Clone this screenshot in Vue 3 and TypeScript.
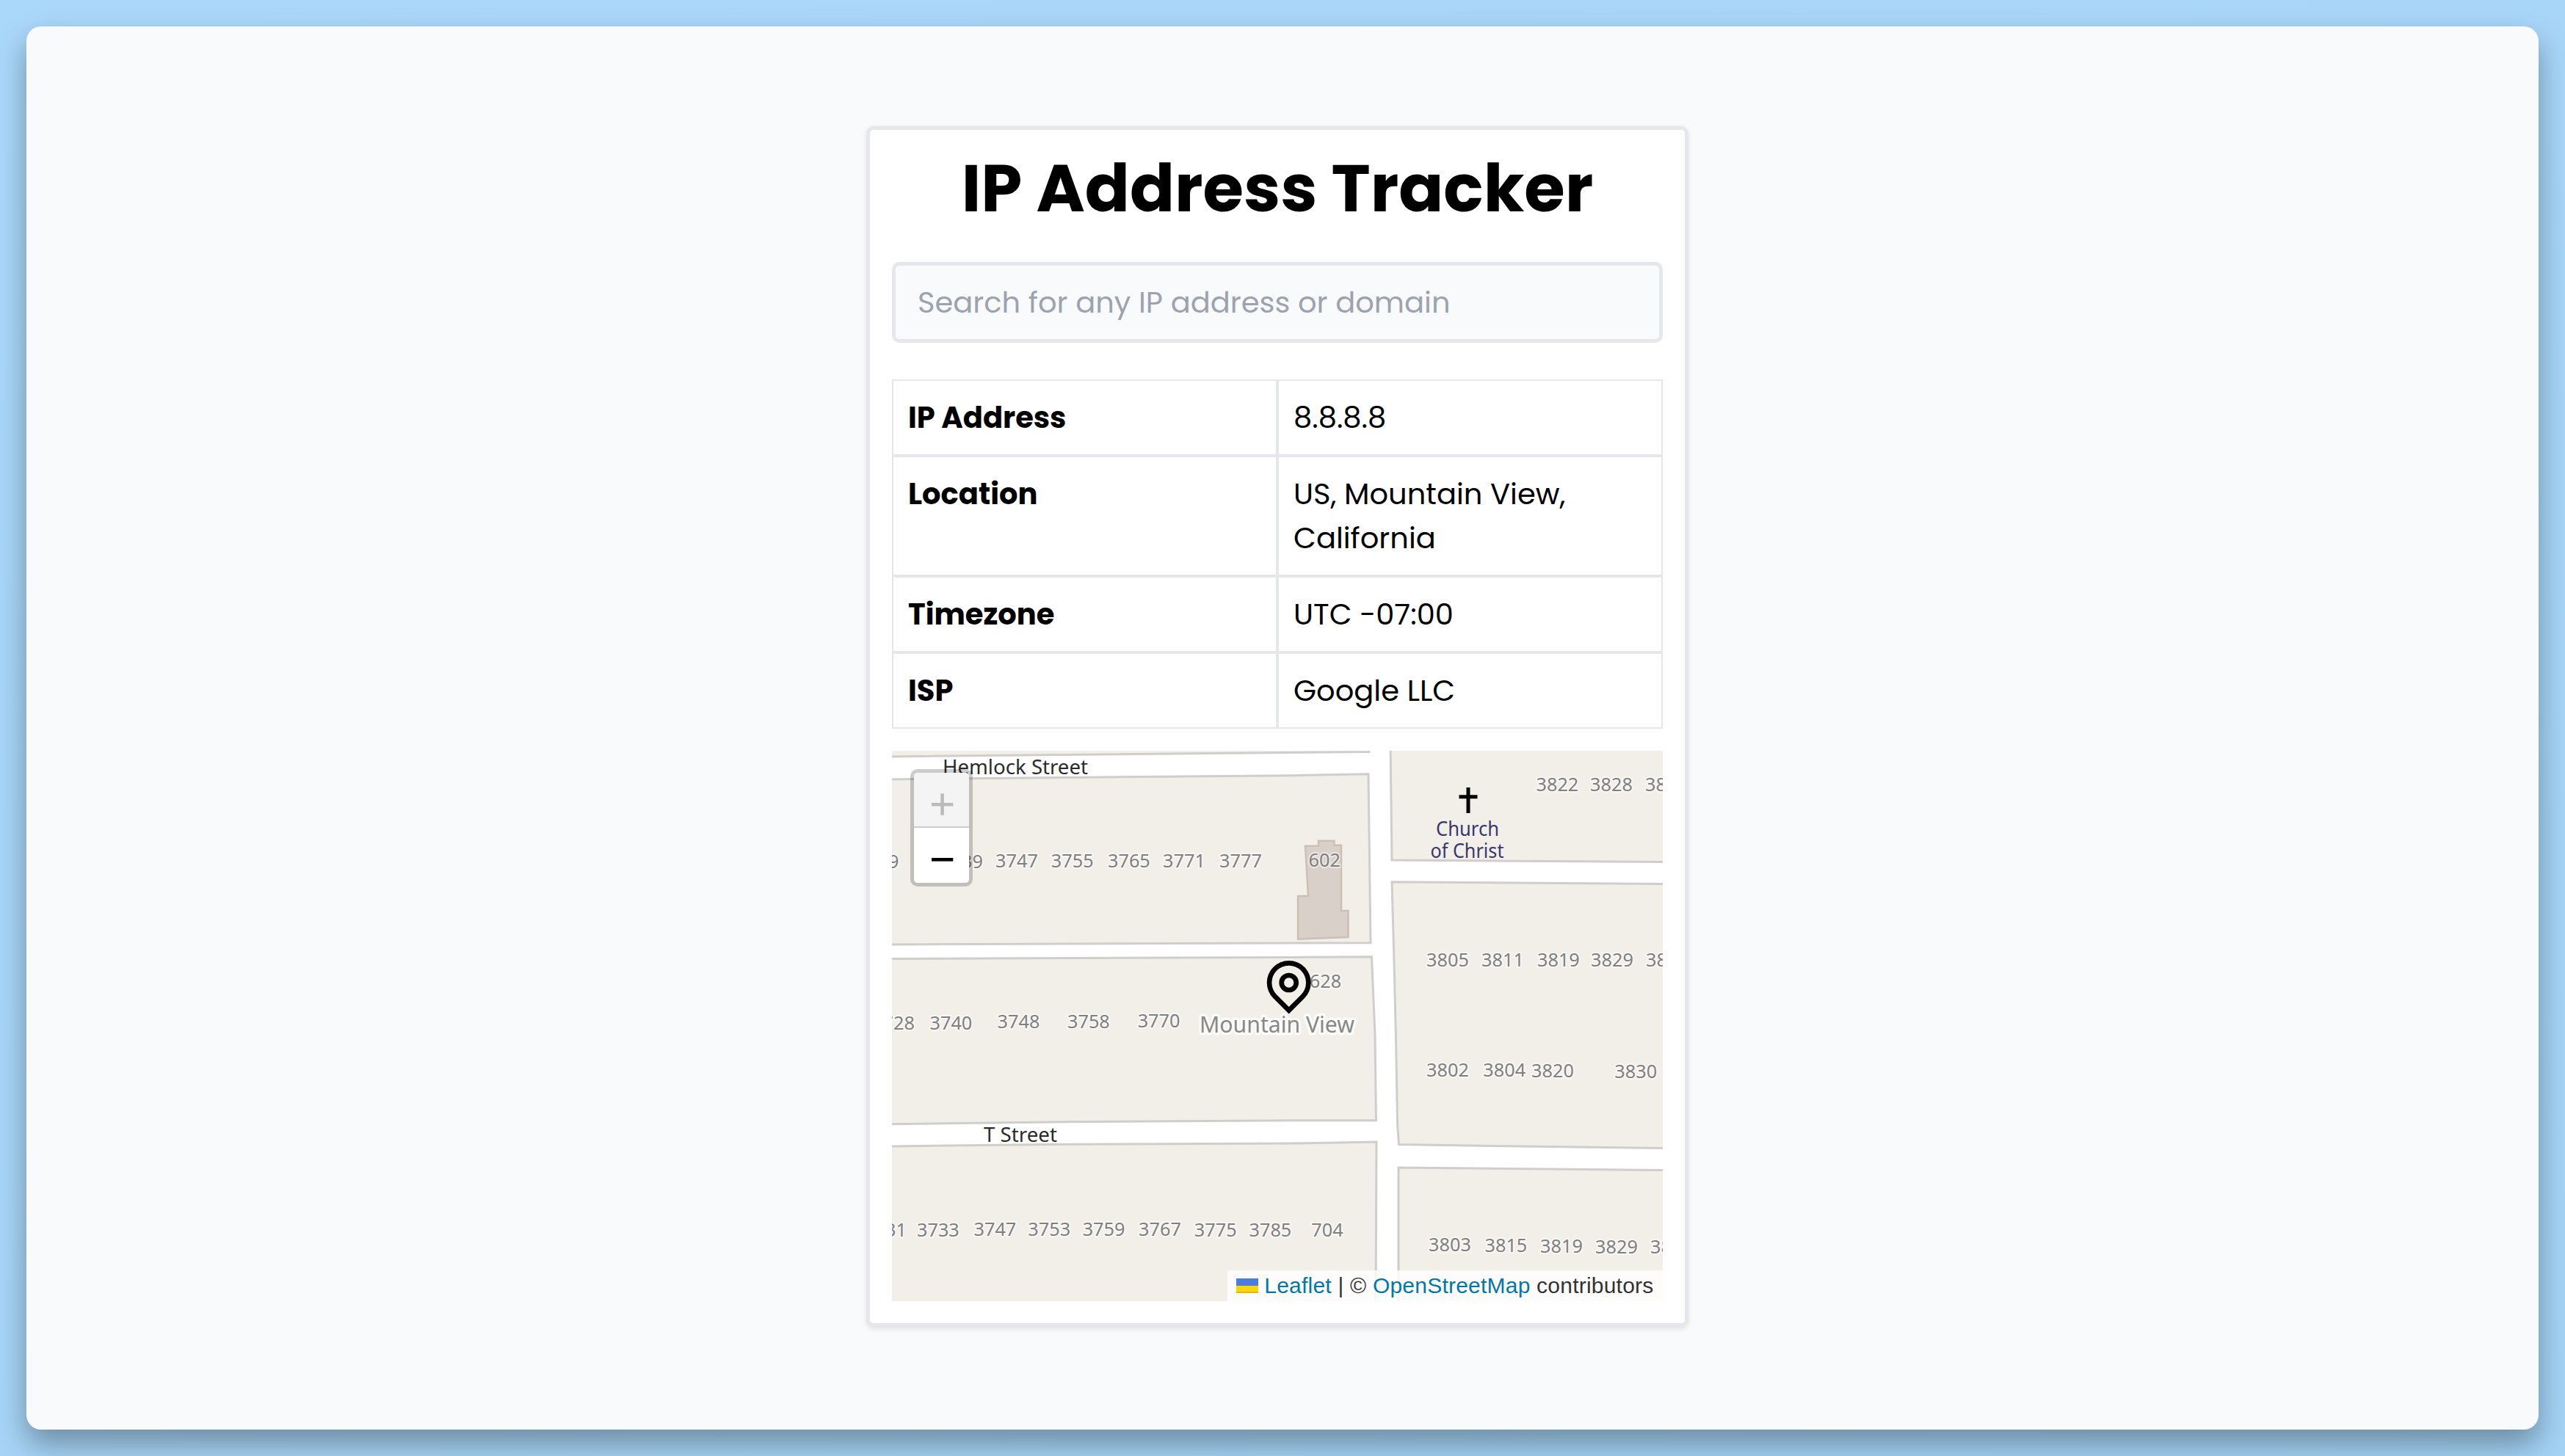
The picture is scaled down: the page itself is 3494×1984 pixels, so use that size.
<script setup lang="ts">
import { ref } from 'vue'

interface Row { label: string; lines: string[] }
interface House { t: string; x: number; y: number; a?: 'start' | 'end' }

const query = ref('')

const rows: Row[] = [
  { label: 'IP Address', lines: ['8.8.8.8'] },
  { label: 'Location', lines: ['US, Mountain View,', 'California'] },
  { label: 'Timezone', lines: ['UTC -07:00'] },
  { label: 'ISP', lines: ['Google LLC'] },
]

const blocks = [
  'M-10 -10V8L650 1.5V-10Z',
  'M-10 39L235 36.5L545 33.7L649 31.7L652 261.7L545 262L-10 264Z',
  'M-10 283.5L545 281.5L653.5 280.7L658 387L659.5 503.7L545 503.7L235 505.7L-10 509Z',
  'M-10 539L235 536.3L545 535L660 533L659 760H-10Z',
  'M679 -10L681 149L1060 151.5V-10Z',
  'M681 178.7L1060 181.5V541.5L857 539L690.5 536.5L688.6 510L686.4 387L684 287Z',
  'M690 568L1060 571.5V760H690Z',
]

const houses: House[] = [
  { t: '3729', x: 9.5, y: 160, a: 'end' }, { t: '3739', x: 124, y: 160, a: 'end' },
  { t: '3747', x: 170, y: 159 }, { t: '3755', x: 245.7, y: 159 }, { t: '3765', x: 322.9, y: 159 },
  { t: '3771', x: 398, y: 159 }, { t: '3777', x: 475, y: 158.5 }, { t: '602', x: 589.3, y: 158 },
  { t: '3728', x: 31, y: 379.5, a: 'end' }, { t: '3740', x: 80.4, y: 379.5 }, { t: '3748', x: 172.5, y: 378 },
  { t: '3758', x: 267.9, y: 377.7 }, { t: '3770', x: 363.6, y: 377.2 }, { t: '628', x: 590.4, y: 322.5 },
  { t: '3822', x: 906.4, y: 55 }, { t: '3828', x: 980, y: 54.7 }, { t: '3836', x: 1026, y: 54.7, a: 'start' },
  { t: '3805', x: 757, y: 293.5 }, { t: '3811', x: 832, y: 294 }, { t: '3819', x: 907.9, y: 294 },
  { t: '3829', x: 981, y: 294 }, { t: '3835', x: 1027, y: 294, a: 'start' },
  { t: '3802', x: 757, y: 443.5 }, { t: '3804', x: 834.3, y: 443.5 }, { t: '3820', x: 900, y: 445 }, { t: '3830', x: 1013.2, y: 445.5 },
  { t: '3803', x: 760, y: 682 }, { t: '3815', x: 836.4, y: 682.5 }, { t: '3819', x: 912, y: 683.5 },
  { t: '3829', x: 987, y: 684.5 }, { t: '3835', x: 1033, y: 684.7, a: 'start' },
  { t: '3731', x: 20, y: 662, a: 'end' }, { t: '3733', x: 62.9, y: 662 }, { t: '3747', x: 140.4, y: 661 },
  { t: '3753', x: 214.3, y: 661 }, { t: '3759', x: 288.6, y: 660.5 }, { t: '3767', x: 365, y: 660.5 },
  { t: '3775', x: 440.7, y: 661.5 }, { t: '3785', x: 515.4, y: 662 }, { t: '704', x: 592.9, y: 662 },
]
</script>

<template>
  <div class="page">
    <main class="panel">
      <section class="card">
        <h1 class="title">IP Address Tracker</h1>
        <input v-model="query" class="search" type="text" placeholder="Search for any IP address or domain" />
        <div class="table">
          <div v-for="row in rows" :key="row.label" class="row">
            <div class="cell head">{{ row.label }}</div>
            <div class="cell">
              <div v-for="line in row.lines" :key="line">{{ line }}</div>
            </div>
          </div>
        </div>
        <div class="map">
          <svg class="tiles" viewBox="0 0 1050 750" width="1050" height="750">
            <path v-for="d in blocks" :key="d" :d="d" class="block" />
            <path class="building" d="M563 129.7H581V122.7H602.5V128.7H612V218H621.5V254L553 256.7V198H567Z" />
            <g class="house">
              <text v-for="(h, i) in houses" :key="i" :x="h.x" :y="h.y" :text-anchor="h.a || 'middle'">{{ h.t }}</text>
            </g>
            <text class="street" x="69" y="32" textLength="198" lengthAdjust="spacingAndGlyphs">Hemlock Street</text>
            <text class="street" x="125" y="532.5" textLength="100" lengthAdjust="spacingAndGlyphs">T Street</text>
            <path class="cross" d="M785 50V85M772.5 62.7H797.5" />
            <text class="church" x="741" y="116.3" textLength="86" lengthAdjust="spacingAndGlyphs">Church</text>
            <text class="church" x="733.5" y="146.3" textLength="100" lengthAdjust="spacingAndGlyphs">of Christ</text>
            <text class="place" x="419" y="384.3" textLength="211" lengthAdjust="spacingAndGlyphs">Mountain View</text>
            <path
              transform="translate(500.7 279.3) scale(3.3333)"
              d="M12 20.9l4.95-4.95a7 7 0 1 0-9.9 0L12 20.9zm0 2.828l-6.364-6.364a9 9 0 1 1 12.728 0L12 23.728zM12 13a2 2 0 1 0 0-4 2 2 0 0 0 0 4zm0 2a4 4 0 1 1 0-8 4 4 0 0 1 0 8z"
            />
          </svg>
          <div class="zoom">
            <button class="zbtn off" aria-label="Zoom in">
              <svg width="75" height="75" viewBox="0 0 75 75"><path d="M24 43.3H53.3M38.6 28.3V57.7" /></svg>
            </button>
            <button class="zbtn" aria-label="Zoom out">
              <svg width="75" height="75" viewBox="0 0 75 75"><path d="M24 43.3H53.3" /></svg>
            </button>
          </div>
          <div class="credit">
            <svg class="flag" width="30" height="20" viewBox="0 0 12 8"><path fill="#4C7BE1" d="M0 0h12v4H0z" /><path fill="#FFD500" d="M0 4h12v3H0z" /><path fill="#E0BC00" d="M0 7h12v1H0z" /></svg>
            <a>Leaflet</a> <span>|</span> © <a>OpenStreetMap</a> contributors
          </div>
        </div>
      </section>
    </main>
  </div>
</template>

<style>
body {
  margin: 0;
}
</style>

<style scoped>
.page {
  box-sizing: border-box;
  width: 3494px;
  height: 1984px;
  padding: 36px;
  background: linear-gradient(160deg, #aad8fb, #a4d3f5);
  overflow: hidden;
  font-family: Poppins, Inter, sans-serif;
  color: #000;
}
.panel {
  box-sizing: border-box;
  height: 1912px;
  padding: 136px 14px 0 0;
  border-radius: 20px;
  background: #f9fafc;
  box-shadow: 0 20px 40px rgba(0, 0, 0, 0.34);
  display: flex;
  justify-content: center;
  align-items: flex-start;
}
.card {
  box-sizing: border-box;
  width: 1120px;
  height: 1636px;
  padding: 30px;
  border: 5px solid #e5e7eb;
  border-radius: 10px;
  background: #fff;
  box-shadow: 0 2.5px 7.5px rgba(0, 0, 0, 0.1);
}
.title {
  margin: 0;
  height: 150px;
  font-size: 90px;
  line-height: 100px;
  font-weight: 700;
  text-align: center;
  white-space: nowrap;
}
.search {
  display: block;
  box-sizing: border-box;
  width: 100%;
  height: 110px;
  margin: 0 0 50px;
  padding: 0 30px;
  border: 5px solid #e5e7eb;
  border-radius: 10px;
  background: #f9fafb;
  font: 40px Poppins, Inter, sans-serif;
  outline: none;
}
.search::placeholder {
  color: #9ca3af;
  opacity: 1;
}
.table {
  margin-bottom: 30px;
  font-size: 40px;
  line-height: 60px;
}
.row {
  display: flex;
}
.cell {
  box-sizing: border-box;
  width: 50%;
  padding: 20px;
  border: 2px solid #e5e7eb;
  white-space: nowrap;
}
.head {
  font-weight: 700;
}
.map {
  position: relative;
  height: 750px;
  overflow: hidden;
  background: #fff;
}
.tiles {
  display: block;
}
.block {
  fill: #f2efe9;
  stroke: #cfcecc;
  stroke-width: 3;
}
.building {
  fill: #d9d0c9;
  stroke: #cdbfb5;
  stroke-width: 2.5;
}
.tiles text {
  font-family: 'Noto Sans', sans-serif;
  font-size: 27.5px;
  paint-order: stroke;
  stroke-linejoin: round;
}
.tiles .house text {
  font-size: 25.3px;
  fill: #808080;
  stroke: rgba(255, 255, 255, 0.5);
  stroke-width: 4;
}
.tiles .street {
  fill: #2b2b2b;
}
.tiles .church {
  fill: #38386f;
}
.tiles .place {
  font-size: 30px;
  fill: #888;
  stroke: rgba(255, 255, 255, 0.75);
  stroke-width: 7;
}
.cross {
  fill: none;
  stroke: #000;
  stroke-width: 5;
}
.zoom {
  position: absolute;
  left: 25px;
  top: 25px;
  width: 75px;
  border: 5px solid rgba(0, 0, 0, 0.2);
  border-radius: 10px;
  background-clip: padding-box;
}
.zbtn {
  display: block;
  width: 75px;
  height: 75px;
  padding: 0;
  border: 0;
  background: #fff;
  border-radius: 0 0 5px 5px;
}
.zbtn.off {
  box-sizing: border-box;
  border-bottom: 2px solid #ccc;
  background: #f4f4f4;
  border-radius: 5px 5px 0 0;
  overflow: hidden;
}
.zbtn svg {
  display: block;
}
.zbtn path {
  stroke: #000;
  stroke-width: 4.6;
}
.zbtn.off path {
  stroke: #bbb;
}
.credit {
  position: absolute;
  right: 0;
  bottom: 0;
  padding: 0 12.5px;
  background: rgba(255, 255, 255, 0.8);
  color: #333;
  font: 30px/42px 'Liberation Sans', sans-serif;
  letter-spacing: 0.22px;
  white-space: nowrap;
}
.credit a {
  color: #0078a8;
}
.flag {
  margin-right: 8px;
  vertical-align: baseline;
}
</style>
